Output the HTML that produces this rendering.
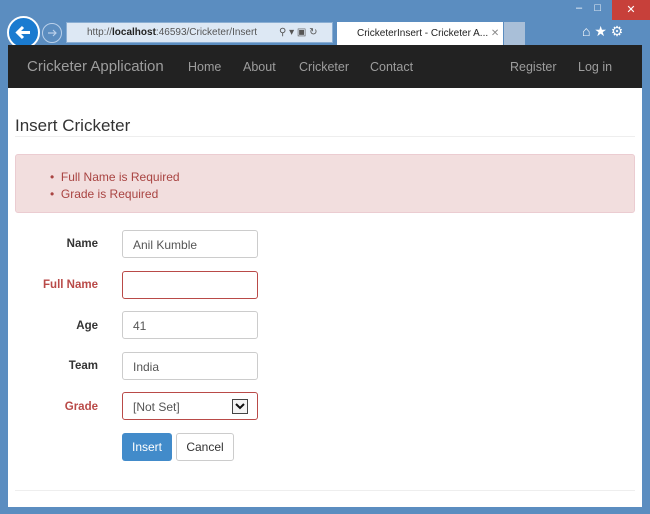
<!DOCTYPE html>
<html><head><style>
*{box-sizing:border-box;margin:0;padding:0}
body{width:650px;height:514px;background:#5b8dc0;font-family:"Liberation Sans",sans-serif;position:relative;overflow:hidden}
.abs{position:absolute}
.page{left:8px;top:88px;width:634px;height:419px;background:#fff}
.nav{left:8px;top:45px;width:634px;height:43px;background:#222}
.nav span{position:absolute;top:15px;color:#9d9d9d;font-size:12.5px}
.lbl{position:absolute;width:90px;text-align:right;font-weight:bold;font-size:11.5px;color:#333;left:8px}
.red{color:#b94a48}
.inp{position:absolute;left:122px;width:136px;height:28px;border:1px solid #ccc;border-radius:3px;font-size:12px;color:#555;padding:7px 10px}
.inp.err{border-color:#b94a48}
</style></head><body>
<div class="abs" style="left:7px;top:16px;width:33px;height:33px;border-radius:50%;background:#1a7bd0;border:2px solid #fff"></div>
<svg class="abs" style="left:13px;top:22px" width="21" height="21" viewBox="0 0 21 21"><path d="M17 10.5H5M10 5l-5.5 5.5L10 16" stroke="#fff" stroke-width="3" fill="none"/></svg>
<div class="abs" style="left:42px;top:23px;width:20px;height:20px;border-radius:50%;border:1px solid #b9d0ea"></div>
<svg class="abs" style="left:46px;top:27px" width="12" height="12" viewBox="0 0 12 12"><path d="M2 6h8M7 3l3 3-3 3" stroke="#b9d0ea" stroke-width="1.2" fill="none"/></svg>
<div class="abs" style="left:66px;top:22px;width:267px;height:21px;background:#dde8f4;border:1px solid #8aaed3;font-size:10px;color:#555;padding:4px 0 0 20px">http://<b style="color:#222">localhost</b>:46593/Cricketer/Insert<span style="position:absolute;left:212px">&#9906; ▾ ▣ ↻</span></div>
<div class="abs" style="left:337px;top:22px;width:166px;height:23px;background:#fff;font-size:10px;color:#222;padding:6px 0 0 20px">CricketerInsert - Cricketer A... <span style="color:#888">✕</span></div>
<div class="abs" style="left:504px;top:22px;width:21px;height:23px;background:#a9bfd8"></div>
<div class="abs" style="left:612px;top:0;width:38px;height:20px;background:#c7403a;color:#fff;font-size:11px;text-align:center;line-height:20px">✕</div>
<div class="abs" style="left:576px;top:2px;color:#fff;font-size:11px">–&nbsp;&nbsp;&nbsp;&nbsp;□</div>
<div class="abs" style="left:582px;top:23px;color:#fff;font-size:14px">⌂ ★ ⚙</div>
<div class="abs nav">
<span style="left:19px;top:13px;font-size:15px;color:#9d9d9d">Cricketer Application</span>
<span style="left:180px">Home</span><span style="left:235px">About</span><span style="left:291px">Cricketer</span><span style="left:362px">Contact</span>
<span style="left:502px">Register</span><span style="left:570px">Log in</span>
</div>
<div class="abs page"></div>
<div class="abs" style="left:15px;top:116px;font-size:17px;color:#333">Insert Cricketer</div>
<div class="abs" style="left:15px;top:136px;width:620px;border-top:1px solid #eee"></div>
<div class="abs" style="left:15px;top:154px;width:620px;height:59px;background:#f2dede;border:1px solid #ebccd1;border-radius:3px;color:#a94442;font-size:12px;padding:14px 0 0 34px;line-height:17px">•&nbsp; Full Name is Required<br>•&nbsp; Grade is Required</div>
<div class="lbl" style="top:238px">Name</div>
<div class="lbl red" style="top:279px">Full Name</div>
<div class="lbl" style="top:320px">Age</div>
<div class="lbl" style="top:360px">Team</div>
<div class="lbl red" style="top:401px">Grade</div>
<div class="inp" style="top:230px">Anil Kumble</div>
<div class="inp err" style="top:271px"></div>
<div class="inp" style="top:311px">41</div>
<div class="inp" style="top:352px">India</div>
<div class="inp err" style="top:392px">[Not Set]<svg style="position:absolute;left:109px;top:6px" width="16" height="15" viewBox="0 0 16 15"><rect x="0.5" y="0.5" width="15" height="14" fill="#f4f4f4" stroke="#444"/><path d="M4 5l4 4 4-4" stroke="#111" stroke-width="2" fill="none"/></svg></div>
<div class="abs" style="left:122px;top:433px;width:50px;height:28px;background:#428bca;border-radius:3px;color:#fff;font-size:12px;text-align:center;line-height:28px">Insert</div>
<div class="abs" style="left:176px;top:433px;width:58px;height:28px;border:1px solid #ccc;border-radius:3px;color:#333;font-size:12px;text-align:center;line-height:26px">Cancel</div>
<div class="abs" style="left:15px;top:490px;width:620px;border-top:1px solid #eee"></div>
</body></html>
